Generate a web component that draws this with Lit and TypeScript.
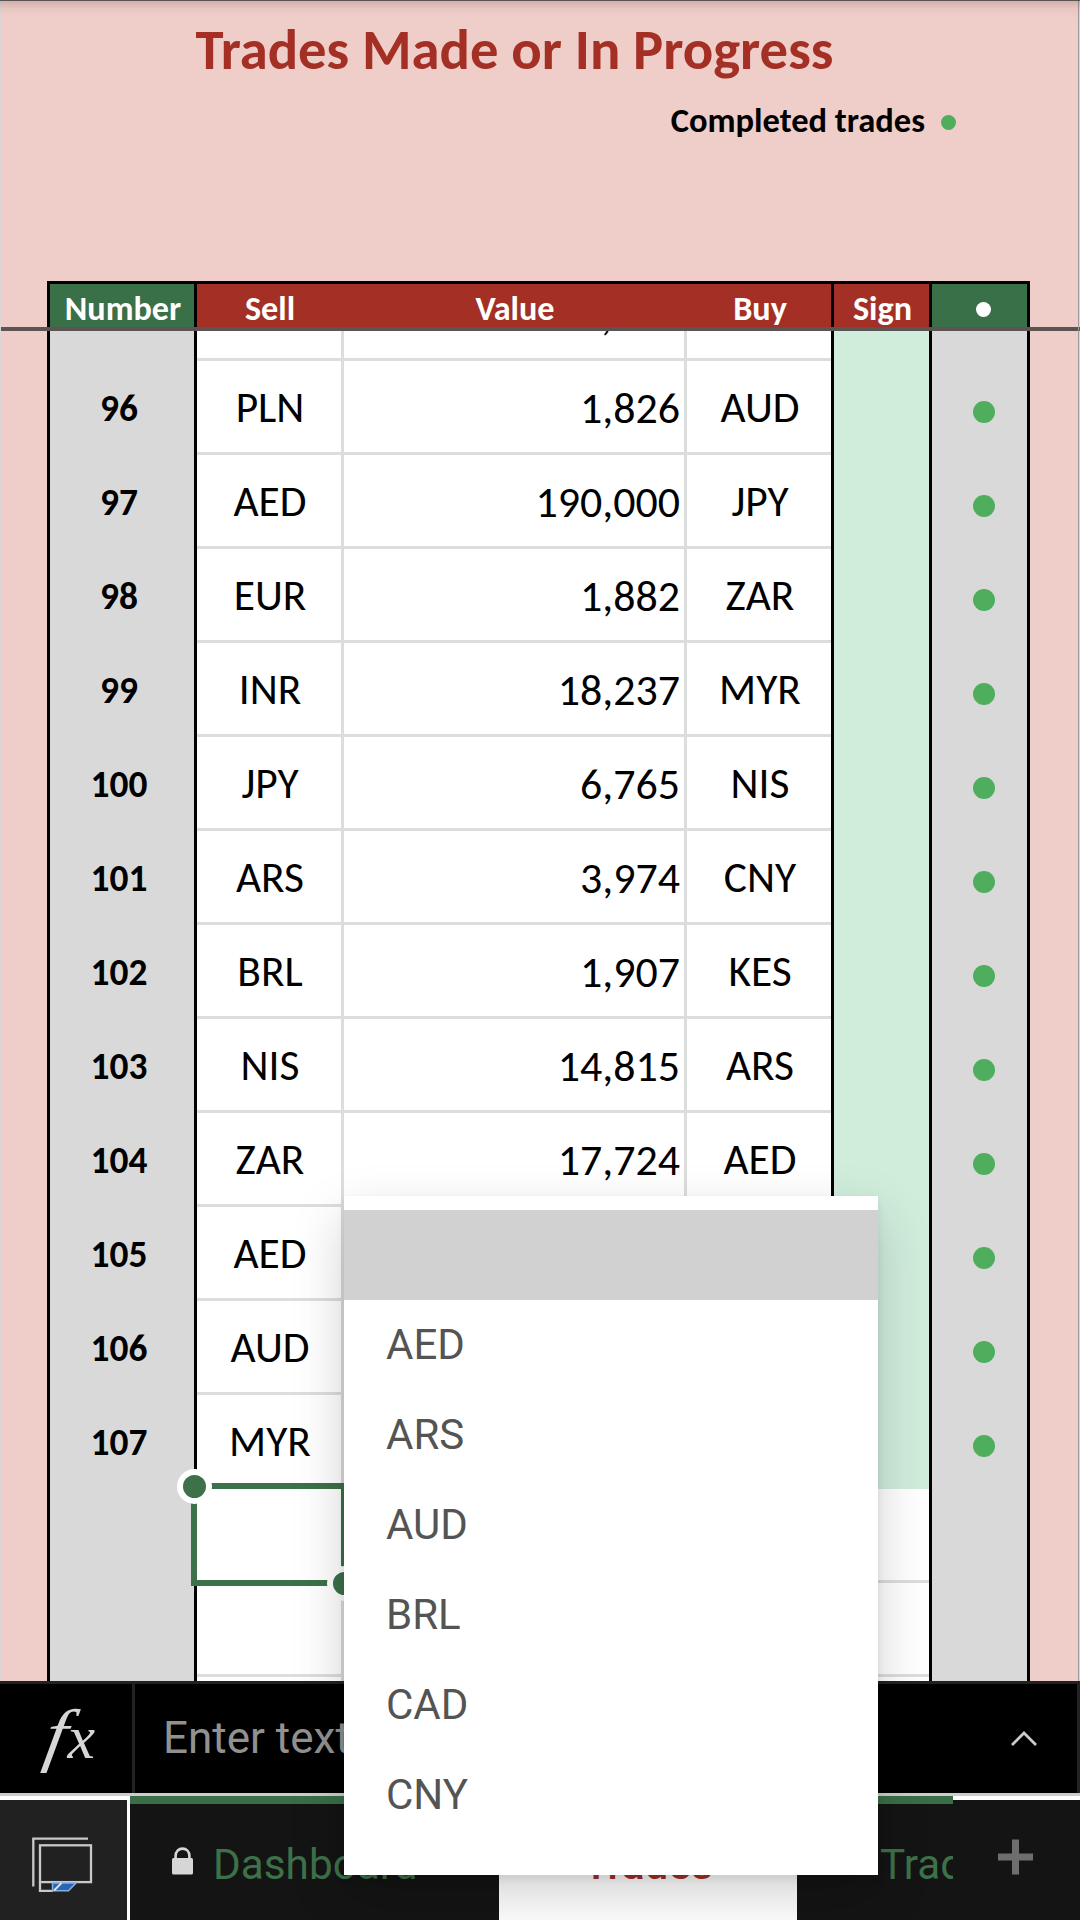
import { LitElement, html, css, svg, nothing } from 'lit';
import { customElement, property } from 'lit/decorators.js';

interface Trade {
  num: string;
  sell: string;
  value: string;
  buy: string;
}

const TRADES: Trade[] = [
  { num: '96', sell: 'PLN', value: '1,826', buy: 'AUD' },
  { num: '97', sell: 'AED', value: '190,000', buy: 'JPY' },
  { num: '98', sell: 'EUR', value: '1,882', buy: 'ZAR' },
  { num: '99', sell: 'INR', value: '18,237', buy: 'MYR' },
  { num: '100', sell: 'JPY', value: '6,765', buy: 'NIS' },
  { num: '101', sell: 'ARS', value: '3,974', buy: 'CNY' },
  { num: '102', sell: 'BRL', value: '1,907', buy: 'KES' },
  { num: '103', sell: 'NIS', value: '14,815', buy: 'ARS' },
  { num: '104', sell: 'ZAR', value: '17,724', buy: 'AED' },
  { num: '105', sell: 'AED', value: '', buy: '' },
  { num: '106', sell: 'AUD', value: '', buy: '' },
  { num: '107', sell: 'MYR', value: '', buy: '' },
];

const OPTIONS = ['', 'AED', 'ARS', 'AUD', 'BRL', 'CAD', 'CNY'];

@customElement('trade-sheet')
export class TradeSheet extends LitElement {
  static styles = css`
    :host {
      display: flex;
      flex-direction: column;
      position: relative;
      height: 1681px;
      overflow: hidden;
      box-sizing: border-box;
      background: #efcdc9;
      color: #000;
      font-family: Carlito, Calibri, "Open Sans", sans-serif;
    }
    .edge-top {
      position: absolute;
      inset: 0 0 auto 0;
      height: 17px;
      border-top: 1px solid #5b5353;
      background: linear-gradient(rgba(90, 60, 60, 0.2), rgba(90, 60, 60, 0.04) 50%, transparent);
    }
    .edge-side {
      position: absolute;
      inset: 0 1px 0 0;
      border-left: 1px solid #dcd6d5;
      border-right: 1px solid #a09a99;
    }
    .banner {
      flex: none;
      height: 281px;
    }
    .title {
      margin: 0 51px 0 0;
      text-align: center;
      font-size: 56.7px;
      font-weight: 700;
      line-height: 100px;
      color: #a42f24;
    }
    .legend {
      display: flex;
      justify-content: flex-end;
      align-items: center;
      gap: 16px;
      padding-right: 124px;
      font-size: 34.5px;
      font-weight: 700;
      line-height: 41px;
    }
    .dot {
      width: 22px;
      height: 22px;
      border-radius: 50%;
      background: #4fae5d;
    }
    .dot.small {
      width: 15px;
      height: 15px;
      margin-top: 3px;
    }
    .dot.white {
      width: 15px;
      height: 15px;
      background: #fff;
    }
    .row {
      flex: none;
      display: grid;
      grid-template-columns: 150px 147px 343px 147px 98px 98px;
      height: 94px;
      margin-left: 47px;
    }
    .cell {
      box-sizing: border-box;
      display: flex;
      align-items: center;
      justify-content: center;
      padding: 0 0 1px 2px;
      font-size: 43.4px;
      line-height: 50px;
      background: #fff;
      border-right: 3px solid #dcdedd;
      box-shadow: inset 0 -3px #dcdedd;
      min-width: 0;
    }
    .cell.num {
      border-left: 3px solid #000;
      border-right-color: #000;
      background: #d9d9d9;
      box-shadow: none;
      font-size: 37.4px;
      font-weight: 700;
      padding: 0 6px 0 0;
    }
    .cell.value {
      justify-content: flex-end;
      padding-right: 4px;
      font-size: 43.9px;
    }
    .cell.buy,
    .cell.sign,
    .cell.mark {
      border-right-color: #000;
    }
    .cell.done {
      background: #d0eddc;
      box-shadow: none;
    }
    .cell.mark {
      background: #d9d9d9;
      box-shadow: none;
      padding: 7px 0 0 9px;
    }
    .row.head {
      box-sizing: border-box;
      width: 983px;
      height: 46px;
      border-top: 3px solid #000;
    }
    .head .cell {
      border-right-color: #a42f24;
      background: #a42f24;
      box-shadow: none;
      color: #fff;
      font-size: 34.2px;
      line-height: 37px;
      font-weight: 700;
      padding: 6px 0 0 2px;
    }
    .head .cell.value {
      justify-content: center;
    }
    .head .cell.num,
    .head .cell.mark {
      background: #3a7047;
    }
    .head .cell.mark {
      padding: 8px 0 0 7px;
    }
    .head .cell.num,
    .head .cell.buy,
    .head .cell.sign,
    .head .cell.mark {
      border-right-color: #000;
    }
    .freeze {
      flex: none;
      height: 4px;
      background: #5b5452;
    }
    .row.cut {
      height: 30px;
      overflow: hidden;
    }
    .cut .value {
      align-items: flex-start;
      overflow: hidden;
      padding-right: 72px;
    }
    .cut .value span {
      margin-top: -41px;
    }
    .selection {
      position: absolute;
      left: 191px;
      top: 1483px;
      width: 144px;
      height: 91px;
      border: 6px solid #3c7149;
    }
    .handle {
      position: absolute;
      width: 23px;
      height: 23px;
      border: 6px solid #fff;
      border-radius: 50%;
      background: #3c7149;
    }
    .handle.start {
      left: -20px;
      top: -20px;
    }
    .handle.end {
      right: -21px;
      bottom: -21px;
    }
  `;

  private cells(trade: Trade | null) {
    return html`
      <div class="row">
        <div class="cell num">${trade?.num}</div>
        <div class="cell">${trade?.sell}</div>
        <div class="cell value">${trade?.value}</div>
        <div class="cell buy">${trade?.buy}</div>
        <div class="cell sign ${trade ? 'done' : ''}"></div>
        <div class="cell mark">${trade ? html`<span class="dot"></span>` : nothing}</div>
      </div>
    `;
  }

  render() {
    return html`
      <div class="banner">
        <h1 class="title">Trades Made or In Progress</h1>
        <div class="legend">Completed trades<span class="dot small"></span></div>
      </div>
      <div class="row head">
        <div class="cell num">Number</div>
        <div class="cell">Sell</div>
        <div class="cell value">Value</div>
        <div class="cell buy">Buy</div>
        <div class="cell sign">Sign</div>
        <div class="cell mark"><span class="dot white"></span></div>
      </div>
      <div class="freeze"></div>
      <div class="row cut">
        <div class="cell num"></div>
        <div class="cell"></div>
        <div class="cell value"><span>,</span></div>
        <div class="cell buy"></div>
        <div class="cell sign done"></div>
        <div class="cell mark"></div>
      </div>
      ${TRADES.map((t) => this.cells(t))} ${[0, 1, 2].map(() => this.cells(null))}
      <div class="edge-side"></div>
      <div class="edge-top"></div>
      <div class="selection">
        <span class="handle start"></span>
        <span class="handle end"></span>
      </div>
    `;
  }
}

@customElement('formula-bar')
export class FormulaBar extends LitElement {
  static styles = css`
    :host {
      display: flex;
      height: 112px;
      box-sizing: border-box;
      border-top: 3px solid #232021;
      border-right: 3px solid #222;
      background: #000;
      color: #d6d6d6;
    }
    .fx {
      box-sizing: border-box;
      width: 135px;
      border-right: 3px solid #222;
      padding-left: 47px;
      font: italic 70px/102px "Liberation Serif", serif;
      white-space: nowrap;
    }
    .f {
      display: inline-block;
      transform: skewX(-10deg) scaleX(1.1);
    }
    .x {
      font-size: 62px;
      margin-left: 1px;
    }
    .entry {
      flex: 1;
      padding-left: 28px;
      font: 44px/108px Roboto, sans-serif;
      color: #919191;
    }
    .chevron {
      width: 26px;
      height: 16px;
      margin: 47px 40px 0 0;
      fill: none;
      stroke: #cbcbcb;
      stroke-width: 2.8;
    }
  `;

  render() {
    return html`
      <div class="fx"><span class="f">f</span><span class="x">x</span></div>
      <div class="entry">Enter text</div>
      <svg class="chevron" viewBox="0 0 26 16"><path d="M1 14 13 2 25 14" /></svg>
    `;
  }
}

@customElement('sheet-tab')
export class SheetTab extends LitElement {
  @property() name = '';
  @property({ type: Boolean }) locked = false;

  static styles = css`
    :host {
      box-sizing: border-box;
      display: flex;
      align-items: flex-start;
      gap: 20px;
      flex: none;
      height: 124px;
      padding-left: 42px;
      overflow: hidden;
      border-top: 8px solid #3a6e47;
      background: #141414;
      color: #3c7149;
      font-family: Roboto, sans-serif;
      font-size: 42.3px;
      line-height: 50px;
      white-space: nowrap;
    }
    :host([active]) {
      justify-content: center;
      padding: 0;
      border-color: #fff;
      background: #fff;
      color: #a42f24;
      font-weight: 500;
    }
    .name {
      margin-top: 36px;
    }
    .lock {
      flex: none;
      width: 21px;
      height: 28px;
      margin-top: 43px;
    }
  `;

  render() {
    return html`
      ${this.locked
        ? html`<svg class="lock" viewBox="0 0 21 28">
            <rect x="0" y="11" width="21" height="16.5" rx="1.5" fill="#d6d6d6" />
            <path d="M3.6 12V9C3.6 4.5 6.6 1.6 10.5 1.6S17.4 4.5 17.4 9v3" fill="none" stroke="#d6d6d6" stroke-width="2.6" />
          </svg>`
        : nothing}
      <span class="name">${this.name}</span>
    `;
  }
}

@customElement('sheet-tabs')
export class SheetTabs extends LitElement {
  static styles = css`
    :host {
      display: flex;
      height: 127px;
      box-sizing: border-box;
      border-top: 3px solid #cbcfcb;
      background: #141414;
      overflow: hidden;
    }
    .all {
      box-sizing: border-box;
      width: 130px;
      border-top: 4px solid #fff;
      border-right: 3px solid #fff;
      background: #212121;
    }
    .add {
      flex: 1;
      border-top: 4px solid #fff;
    }
    svg {
      display: block;
    }
    .first {
      width: 369px;
    }
    .second {
      width: 298px;
    }
    .third {
      width: 156px;
    }
  `;

  render() {
    return html`
      <div class="all">
        <svg width="127" height="120" viewBox="0 1800 127 120" fill="none" stroke="#c9c9c9" stroke-width="2.3">
          <path d="M33.3 1886.5V1838.7H88" />
          <rect x="40" y="1845.3" width="51" height="36.8" />
          <path d="M40 1882v8.8h13" />
          ${svg`<path d="M52.5 1883h23.5l-7.5 7.8H52.5z" fill="#2b66b5" stroke="#7fb0e6" stroke-width="1.5" />
          <path d="M61.5 1883 54 1890.5" stroke="#e4e4e4" stroke-width="1.8" />`}
        </svg>
      </div>
      <sheet-tab class="first" name="Dashboard" locked></sheet-tab>
      <sheet-tab class="second" name="Trades" active></sheet-tab>
      <sheet-tab class="third" name="Trades" locked></sheet-tab>
      <div class="add">
        <svg width="127" height="120" viewBox="953 1800 127 120">
          <path d="M998 1857h35M1015.5 1839.5v35" stroke="#6e6e6e" stroke-width="7" />
        </svg>
      </div>
    `;
  }
}

@customElement('app-root')
export class AppRoot extends LitElement {
  static styles = css`
    :host {
      display: block;
      position: relative;
      width: 1080px;
      height: 1920px;
      overflow: hidden;
      background: #000;
    }
    .menu {
      position: absolute;
      left: 344px;
      top: 1196px;
      box-sizing: border-box;
      width: 534px;
      height: 679px;
      padding-top: 14px;
      background: #fff;
      color: #545454;
      font: 42px/90px Roboto, sans-serif;
      box-shadow: 0 20px 50px rgba(0, 0, 0, 0.18), 0 4px 8px rgba(0, 0, 0, 0.08);
    }
    .option {
      height: 90px;
      padding-left: 42px;
    }
    .option.selected {
      background: #d1d1d1;
    }
  `;

  render() {
    return html`
      <trade-sheet></trade-sheet>
      <formula-bar></formula-bar>
      <sheet-tabs></sheet-tabs>
      <div class="menu">
        ${OPTIONS.map((o) => html`<div class="option ${o ? '' : 'selected'}">${o}</div>`)}
      </div>
    `;
  }
}
